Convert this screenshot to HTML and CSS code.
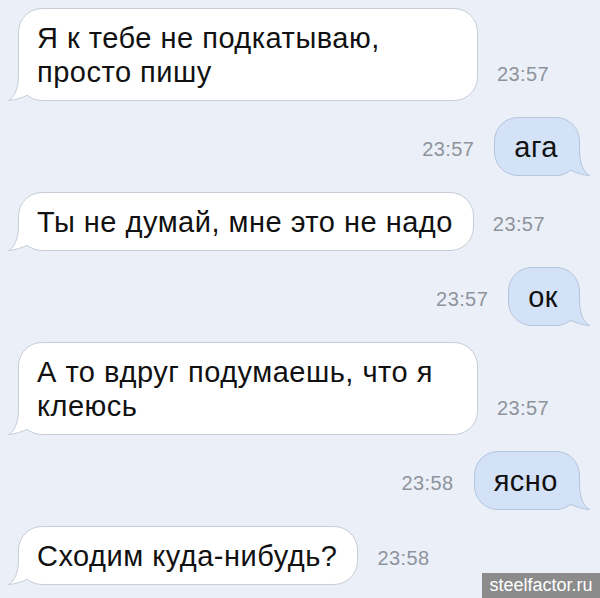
FILE: index.html
```html
<!DOCTYPE html>
<html lang="ru">
<head>
    <meta charset="UTF-8">
    <meta name="viewport" content="width=device-width, initial-scale=1.0">
    <title>Переписка</title>
    <link rel="stylesheet" href="styles.css">
</head>
<body>

    <div class="chat">
        <div class="row in">
            <div class="bubble">
                Я к тебе не подкатываю, просто пишу
                <svg class="tail" viewBox="0 0 24 30"><path class="tail-fill" d="M11.5,3.5 C11.5,17.5 7.5,26.5 1.5,29.5 C8.5,29 15.5,26.5 20.5,24.2 L20.5,3.5 Z"/><path class="tail-line" d="M11.5,3.5 C11.5,17.5 7.5,26.5 1.5,29.5 C8.5,29 15.5,26.5 20.5,24.2"/></svg>
            </div>
            <span class="time">23:57</span>
        </div>

        <div class="row out">
            <span class="time">23:57</span>
            <div class="bubble">
                ага
                <svg class="tail" viewBox="0 0 24 30"><path class="tail-fill" d="M11.5,3.5 C11.5,17.5 7.5,26.5 1.5,29.5 C8.5,29 15.5,26.5 20.5,24.2 L20.5,3.5 Z"/><path class="tail-line" d="M11.5,3.5 C11.5,17.5 7.5,26.5 1.5,29.5 C8.5,29 15.5,26.5 20.5,24.2"/></svg>
            </div>
        </div>

        <div class="row in">
            <div class="bubble">
                Ты не думай, мне это не надо
                <svg class="tail" viewBox="0 0 24 30"><path class="tail-fill" d="M11.5,3.5 C11.5,17.5 7.5,26.5 1.5,29.5 C8.5,29 15.5,26.5 20.5,24.2 L20.5,3.5 Z"/><path class="tail-line" d="M11.5,3.5 C11.5,17.5 7.5,26.5 1.5,29.5 C8.5,29 15.5,26.5 20.5,24.2"/></svg>
            </div>
            <span class="time">23:57</span>
        </div>

        <div class="row out">
            <span class="time">23:57</span>
            <div class="bubble">
                ок
                <svg class="tail" viewBox="0 0 24 30"><path class="tail-fill" d="M11.5,3.5 C11.5,17.5 7.5,26.5 1.5,29.5 C8.5,29 15.5,26.5 20.5,24.2 L20.5,3.5 Z"/><path class="tail-line" d="M11.5,3.5 C11.5,17.5 7.5,26.5 1.5,29.5 C8.5,29 15.5,26.5 20.5,24.2"/></svg>
            </div>
        </div>

        <div class="row in">
            <div class="bubble">
                А то вдруг подумаешь, что я клеюсь
                <svg class="tail" viewBox="0 0 24 30"><path class="tail-fill" d="M11.5,3.5 C11.5,17.5 7.5,26.5 1.5,29.5 C8.5,29 15.5,26.5 20.5,24.2 L20.5,3.5 Z"/><path class="tail-line" d="M11.5,3.5 C11.5,17.5 7.5,26.5 1.5,29.5 C8.5,29 15.5,26.5 20.5,24.2"/></svg>
            </div>
            <span class="time">23:57</span>
        </div>

        <div class="row out">
            <span class="time">23:58</span>
            <div class="bubble">
                ясно
                <svg class="tail" viewBox="0 0 24 30"><path class="tail-fill" d="M11.5,3.5 C11.5,17.5 7.5,26.5 1.5,29.5 C8.5,29 15.5,26.5 20.5,24.2 L20.5,3.5 Z"/><path class="tail-line" d="M11.5,3.5 C11.5,17.5 7.5,26.5 1.5,29.5 C8.5,29 15.5,26.5 20.5,24.2"/></svg>
            </div>
        </div>

        <div class="row in">
            <div class="bubble">
                Сходим куда-нибудь?
                <svg class="tail" viewBox="0 0 24 30"><path class="tail-fill" d="M11.5,3.5 C11.5,17.5 7.5,26.5 1.5,29.5 C8.5,29 15.5,26.5 20.5,24.2 L20.5,3.5 Z"/><path class="tail-line" d="M11.5,3.5 C11.5,17.5 7.5,26.5 1.5,29.5 C8.5,29 15.5,26.5 20.5,24.2"/></svg>
            </div>
            <span class="time">23:58</span>
        </div>
    </div>

    <div class="watermark">steelfactor.ru</div>

</body>
</html>
```

FILE: styles.css
```css
html, body {
    margin: 0;
    height: 100%;
}
body {
    background-color: #eaeff8;
    font-family: "Liberation Sans", Arial, sans-serif;
    position: relative;
    overflow: hidden;
}
.chat {
    display: flex;
    flex-direction: column;
    gap: 16px;
    padding: 8px 20px 0 18px;
}
.row {
    display: flex;
    align-items: flex-end;
    gap: 19px;
}
.row.out {
    justify-content: flex-end;
    gap: 20px;
}
.bubble {
    position: relative;
    max-width: 420px;
    padding: 12px 20px 11px 18px;
    border: 1px solid #c8ced8;
    border-radius: 24px;
    background-color: #fff;
    color: #111;
    font-size: 29px;
    letter-spacing: 0.5px;
    line-height: 34px;
}
.out .bubble {
    padding: 12px 21px 11px 19px;
    background-color: #d3e2f6;
    border-color: #b4c5dd;
}
.tail {
    position: absolute;
    left: -12px;
    bottom: -1px;
    width: 24px;
    height: 30px;
    overflow: visible;
}
.out .tail {
    left: auto;
    right: -12px;
    transform: scaleX(-1);
}
.tail-fill {
    fill: #fff;
}
.tail-line {
    fill: none;
    stroke: #c8ced8;
    stroke-width: 1;
}
.out .tail-fill {
    fill: #d3e2f6;
}
.out .tail-line {
    stroke: #b4c5dd;
}
.time {
    color: #8f949c;
    font-size: 20px;
    letter-spacing: 0.4px;
    line-height: 20px;
    margin-bottom: 17px;
    white-space: nowrap;
}
.watermark {
    position: absolute;
    right: 0;
    bottom: 0;
    width: 118px;
    height: 25px;
    background-color: #8b8b8b;
    color: #fff;
    font-size: 18px;
    line-height: 25px;
    text-align: center;
}
```
